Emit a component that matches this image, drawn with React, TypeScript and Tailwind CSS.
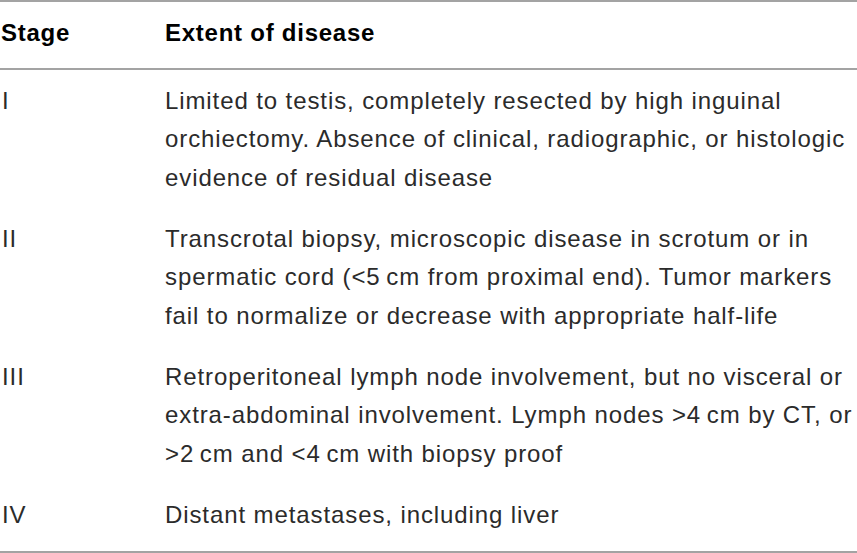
import React from 'react';

export default function App() {
  const rows = [
    {
      stage: 'I',
      lines: [
        'Limited to testis, completely resected by high inguinal',
        'orchiectomy. Absence of clinical, radiographic, or histologic',
        'evidence of residual disease',
      ],
    },
    {
      stage: 'II',
      lines: [
        'Transcrotal biopsy, microscopic disease in scrotum or in',
        'spermatic cord (<5\u2009cm from proximal end). Tumor markers',
        'fail to normalize or decrease with appropriate half-life',
      ],
    },
    {
      stage: 'III',
      lines: [
        'Retroperitoneal lymph node involvement, but no visceral or',
        'extra-abdominal involvement. Lymph nodes >4\u2009cm by CT, or',
        '>2\u2009cm and <4\u2009cm with biopsy proof',
      ],
    },
    {
      stage: 'IV',
      lines: ['Distant metastases, including liver'],
    },
  ];

  return (
    <div className="w-[857px] h-[553px] bg-white font-['Liberation_Sans',Arial,sans-serif] text-[#2b2b2b]">
      <div className="border-t-2 border-b-2 border-[#a3a3a3]">
        <div className="grid grid-cols-[165px_1fr] pt-[11.5px] pb-[15.5px] border-b-2 border-[#a3a3a3] text-[24px] leading-[38.5px] tracking-[0.75px] font-bold text-black">
          <div className="pl-[1px]">Stage</div>
          <div>Extent of disease</div>
        </div>
        {rows.map((row, i) => (
          <div
            key={row.stage}
            className={`grid grid-cols-[165px_1fr] text-[24px] leading-[38.5px] tracking-[0.9px] ${
              i === 0 ? 'pt-[12px] pb-[11.5px]' : i === rows.length - 1 ? 'pt-[11px] pb-[17px]' : 'pt-[11px] pb-[11.5px]'
            }`}
          >
            <div className="pl-[2px]">{row.stage}</div>
            <div>
              {row.lines.map((line) => (
                <div key={line} className="whitespace-nowrap">
                  {line}
                </div>
              ))}
            </div>
          </div>
        ))}
      </div>
    </div>
  );
}
